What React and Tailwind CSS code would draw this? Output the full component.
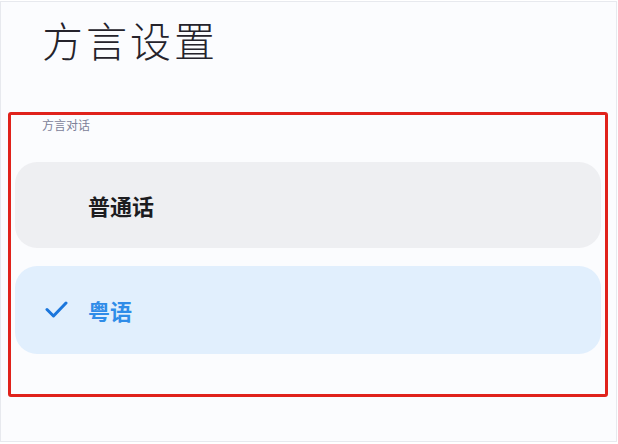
export default function App() {
  const font = { fontFamily: '"Noto Sans CJK SC", "Noto Sans", sans-serif' };

  return (
    <div className="h-[444px] w-[618px] overflow-hidden bg-white" style={font}>
      <div className="mt-px h-[441px] w-[617px] border border-[#e7e9ee] bg-[#fbfcfe]">
        <h1 className="pl-[41px] pt-[13px] text-[41px] font-extralight leading-[49px] tracking-[3px] text-[#25232b]">
          方言设置
        </h1>

        <section className="ml-[7px] mt-[48px] w-[600px] rounded-[3px] border-[3px] border-[#e0221b] px-[4px] pb-[40px] pt-[2px]">
          <p className="pl-[27px] text-[12px] leading-[16px] text-[#7d8199]">方言对话</p>

          <ul className="mt-[29px] flex flex-col gap-[18px]">
            <li className="flex h-[86px] items-center rounded-[22px] bg-[#eeeff2] pl-[73px]">
              <span className="text-[22px] font-bold text-[#1c1c1f]">普通话</span>
            </li>
            <li className="flex h-[88px] items-center gap-[20px] rounded-[22px] bg-[#e1effd] pl-[30px]">
              <svg width="23" height="17" viewBox="0 0 23 17" fill="none" className="mt-[-2px]">
                <path d="M2 8.5 L8.5 15 L21 2" stroke="#1b76dc" strokeWidth="3" strokeLinecap="round" strokeLinejoin="round" />
              </svg>
              <span className="text-[22px] font-bold text-[#2f8ce8]">粤语</span>
            </li>
          </ul>
        </section>
      </div>
    </div>
  );
}
